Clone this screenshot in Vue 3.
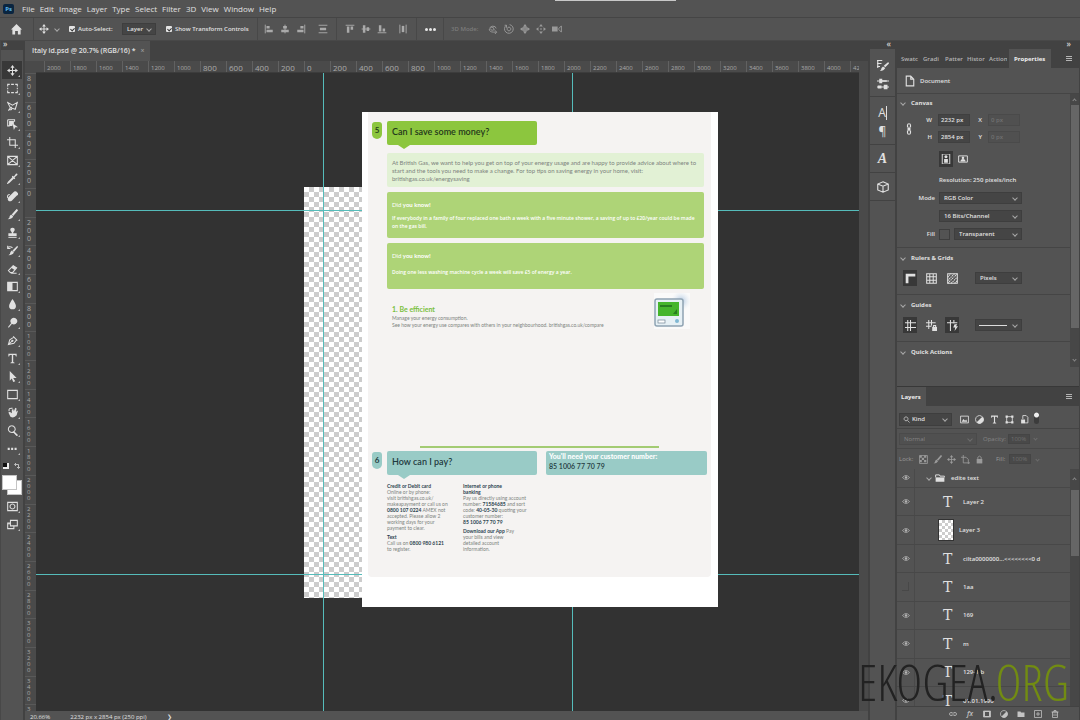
<template>
  <div class="app">
    <div class="window-handle"></div>

    <!-- menu bar -->
    <nav class="menubar">
      <span class="ps-logo">Ps</span>
      <button v-for="m in menus" :key="m" class="menu-item">{{ m }}</button>
    </nav>

    <!-- options bar -->
    <div class="options">
      <button class="home" aria-label="Home">
        <svg viewBox="0 0 12 12"><path class="f" d="M6 0 L12 6 H10.500 V11.500 H7.500 V7.500 H4.500 V11.500 H1.500 V6 H0 Z" /></svg>
      </button>
      <button class="current-tool" aria-label="Move tool">
        <svg viewBox="0 0 16 16"><path class="s" :d="icons.move.s" /><path class="f" :d="icons.move.f" /></svg>
        <i class="chev"></i>
      </button>
      <label class="check auto"><input v-model="autoSelect" type="checkbox" />Auto-Select:</label>
      <span class="select-box target">
        <select v-model="target" aria-label="Auto-select target"><option>Layer</option><option>Group</option></select>
      </span>
      <label class="check transform"><input v-model="showTransform" type="checkbox" />Show Transform Controls</label>
      <div v-for="(g, i) in alignGroups" :key="i" class="align-group" :class="'align-' + i">
        <button v-for="n in g" :key="n" :aria-label="n">
          <svg viewBox="0 0 16 16"><path class="s" :d="icons[n].s" /><path class="f" :d="icons[n].f" /></svg>
        </button>
      </div>
      <button class="more" aria-label="More options"><b></b><b></b><b></b></button>
      <div class="mode3d">
        <span>3D Mode:</span>
        <button v-for="n in modeIcons" :key="n" :aria-label="n">
          <svg viewBox="0 0 16 16"><path class="s" :d="icons[n].s" /><path class="f" :d="icons[n].f" /></svg>
        </button>
      </div>
    </div>

    <div class="workspace">
      <!-- tools -->
      <aside class="tools">
        <div class="dock-head">»</div>
        <button
          v-for="t in tools"
          :key="t"
          class="tool"
          :class="{ active: t === activeTool }"
          :aria-label="t"
          @click="activeTool = t"
        >
          <svg viewBox="0 0 16 16"><path class="s" :d="icons[t].s" /><path class="f" :d="icons[t].f" /></svg>
        </button>
        <div class="swatch-mini">
          <i class="mini-colors"></i>
          <svg viewBox="0 0 16 16"><path class="s" d="M4 5 H11 V12 M6 2 L3 5 L6 8 M8 10 L11 13 L14 10" /></svg>
        </div>
        <div class="swatches"><i class="bg"></i><i class="fg"></i></div>
        <button class="tool" aria-label="Quick mask">
          <svg viewBox="0 0 16 16"><path class="s" d="M1 2 H15 V14 H1 Z M8 4.500 A3.500 3.500 0 1 1 7.900 4.500" /></svg>
        </button>
        <button class="tool" aria-label="Screen mode">
          <svg viewBox="0 0 16 16"><path class="s" d="M5 2 H15 V10 H5 Z M5 6 H1 V14 H10 V10 M3 8 V5" /></svg>
        </button>
      </aside>

      <!-- document -->
      <main class="document">
        <div class="tabs"><div class="tab">Italy id.psd @ 20.7% (RGB/16) * <button aria-label="Close">×</button></div></div>
        <div class="doc-grid">
          <div class="corner"></div>
          <div class="ruler-x">
            <span v-for="n in rulerX" :key="n.id" :class="{ small: n.value > 999 }">{{ n.value }}</span>
          </div>
          <div class="ruler-y">
            <span v-for="n in rulerY" :key="n.id" :class="{ small: n.value > 999 }">
              <b v-for="(d, i) in String(n.value)" :key="i">{{ d }}</b>
            </span>
          </div>
          <div class="canvas">
            <div class="artboard"></div>
            <i class="guide v one"></i>
            <i class="guide v two"></i>
            <i class="guide h one"></i>
            <i class="guide h two"></i>

            <article class="bill">
              <div class="sheet">
                <section class="money">
                  <span class="badge">5</span>
                  <h2>Can I save some money?</h2>
                </section>
                <p class="box pale">
                  <span v-for="l in intro" :key="l">{{ l }}</span>
                </p>
                <p class="box green">
                  <span>Did <b>you know!</b></span>
                  <span class="fact">If everybody in a family of four replaced one bath a week with a five minute shower, a saving of up to £20/year could be made</span>
                  <span class="cont">on the gas bill.</span>
                </p>
                <p class="box green">
                  <span>Did <b>you know!</b></span>
                  <span class="fact single">Doing one less washing machine cycle a week will save £5 of energy a year.</span>
                </p>
                <div class="efficient">
                  <div>
                    <h3>1. Be efficient</h3>
                    <p>Manage your energy consumption.</p>
                    <p>See how your energy use compares with others in your neighbourhood. britishgas.co.uk/compare</p>
                  </div>
                  <svg class="meter" viewBox="0 0 36 36">
                    <defs>
                      <radialGradient id="glow"><stop offset="0" stop-color="#a9c3de" /><stop offset="1" stop-color="#e4ecf5" stop-opacity="0" /></radialGradient>
                    </defs>
                    <rect width="36" height="36" fill="#fafafa" />
                    <circle cx="27" cy="8" r="10" fill="url(#glow)" />
                    <rect x="1" y="6" width="28" height="27" rx="2" fill="#e6f0f5" stroke="#8fa3b3" stroke-width="1.500" />
                    <rect x="4" y="9" width="21" height="14" fill="#45b52c" />
                    <path d="M6 12 H18 V14 H6 Z M19 21 H23 V16 Z" fill="#287d20" />
                    <rect x="4" y="27" width="7" height="3" fill="#fff" stroke="#708594" stroke-width=".700" />
                    <circle cx="23" cy="28" r="2" fill="#80b7d3" />
                  </svg>
                </div>
                <hr />
                <section class="pay">
                  <span class="badge">6</span>
                  <h2>How can I pay?</h2>
                  <div class="customer"><b>You'll need your customer number:</b><span>85 1006 77 70 79</span></div>
                </section>
                <div class="columns">
                  <div>
                    <h4>Credit or Debit card</h4>
                    <p>Online or by phone:</p>
                    <p>visit britishgas.co.uk/</p>
                    <p>makeapayment or call us on</p>
                    <p><b>0800 107 0224</b> AMEX not</p>
                    <p>accepted. Please allow 2</p>
                    <p>working days for your</p>
                    <p>payment to clear.</p>
                    <h4 class="gap">Text</h4>
                    <p>Call us on <b>0800 980 6121</b></p>
                    <p>to register.</p>
                  </div>
                  <div>
                    <h4>Internet or phone</h4>
                    <h4>banking</h4>
                    <p>Pay us directly using account</p>
                    <p>number: <b>71584685</b> and sort</p>
                    <p>code: <b>40-05-30</b> quoting your</p>
                    <p>customer number:</p>
                    <p><b>85 1006 77 70 79</b></p>
                    <p class="gap"><b>Download our App</b> Pay</p>
                    <p>your bills and view</p>
                    <p>detailed account</p>
                    <p>information.</p>
                  </div>
                </div>
              </div>
            </article>
          </div>
        </div>
        <footer class="status"><span>20.66%</span><span>2232 px x 2854 px (250 ppi)</span><span>❯</span></footer>
      </main>

      <!-- collapsed panels -->
      <aside class="dock">
        <div class="dock-head">«</div>
        <div v-for="(g, i) in dockGroups" :key="i" class="dock-group">
          <button v-for="n in g" :key="n" :aria-label="n">
            <span v-if="icons[n].t" :class="n">{{ icons[n].t }}</span>
            <svg v-else viewBox="0 0 16 16"><path class="s" :d="icons[n].s" /><path class="f" :d="icons[n].f" /></svg>
          </button>
        </div>
      </aside>

      <!-- panels -->
      <aside class="panels">
        <div class="dock-head">»</div>
        <div class="panel-tabs">
          <button v-for="t in panelTabs" :key="t">{{ t }}</button>
          <button class="on">Properties</button>
          <i class="burger"></i>
        </div>
        <div class="props">
          <div class="doc-row">
            <svg viewBox="0 0 16 16"><path class="s" d="M3 1.500 H9 L13 5.500 V14.500 H3 Z M9 1.500 V5.500 H13" /></svg>
            Document
          </div>
          <div class="props-body">
            <div class="sections">
              <section class="sec canvas-sec">
                <h5><i class="chev"></i>Canvas</h5>
                <div class="dims">
                  <svg viewBox="0 0 8 16"><path class="s" d="M2 6 V3 Q2 1 4 1 T6 3 V6 M2 10 V13 Q2 15 4 15 T6 13 V10 M4 5 V11 M2 7.500 H6 M2 9 H6" /></svg>
                  <label for="w">W</label><input id="w" value="2232 px" />
                  <label for="x">X</label><input id="x" value="0 px" disabled />
                  <label for="h">H</label><input id="h" value="2854 px" />
                  <label for="y">Y</label><input id="y" value="0 px" disabled />
                </div>
                <div class="orient">
                  <button class="on" aria-label="Portrait"><svg viewBox="0 0 16 16"><path class="s" d="M2 0 H14 V16 H2 Z" /><path class="f" d="M8 2 A2.500 2.500 0 1 1 7.900 2 M5 8 H11 V14 H5 Z" /></svg></button>
                  <button aria-label="Landscape"><svg viewBox="0 0 16 16"><path class="s" d="M1 3 H15 V13 H1 Z" /><path class="f" d="M8 4 A2 2 0 1 1 7.900 4 M4 12 Q4 8 8 8 T12 12 Z" /></svg></button>
                </div>
                <p class="resolution">Resolution: 250 pixels/inch</p>
                <div class="field"><label for="mode">Mode</label><span class="select-box"><select id="mode"><option>RGB Color</option></select></span></div>
                <div class="field indent"><span class="select-box"><select aria-label="Depth"><option>16 Bits/Channel</option></select></span></div>
                <div class="field"><label for="fill">Fill</label><i class="fill-color"></i><span class="select-box"><select id="fill"><option>Transparent</option></select></span></div>
              </section>
              <section class="sec">
                <h5><i class="chev"></i>Rulers &amp; Grids</h5>
                <div class="icon-row">
                  <button class="on" aria-label="Rulers"><svg viewBox="0 0 16 16"><path class="f" d="M1 1 H15 V5 H5 V15 H1 Z" /></svg></button>
                  <button aria-label="Grid"><svg viewBox="0 0 16 16"><path class="s" d="M1 1 H15 V15 H1 Z M5.500 1 V15 M10.500 1 V15 M1 5.500 H15 M1 10.500 H15" /></svg></button>
                  <button aria-label="Pixel grid"><svg viewBox="0 0 16 16"><path class="s" d="M1 1 H15 V15 H1 Z" /><path class="s dotted" d="M1 6 L6 1 M1 11 L11 1 M1 15 L15 1 M6 15 L15 6 M11 15 L15 11" /></svg></button>
                  <span class="select-box"><select aria-label="Units"><option>Pixels</option></select></span>
                </div>
              </section>
              <section class="sec">
                <h5><i class="chev"></i>Guides</h5>
                <div class="icon-row">
                  <button class="on" aria-label="Show guides"><svg viewBox="0 0 16 16"><path class="s" d="M4 0 V16 M8 0 V16 M0 4 H16 M0 11 H16" /></svg></button>
                  <button aria-label="Lock guides"><svg viewBox="0 0 16 16"><path class="s" d="M4 0 V13 M8 0 V8 M0 4 H14 M0 9 H8 M11 10 V8 H14 V10" /><path class="f" d="M9 10 H16 V16 H9 Z" /></svg></button>
                  <button class="on" aria-label="Smart guides"><svg viewBox="0 0 16 16"><path class="s" d="M5 0 V16 M0 4 H15 M10 0 V5" /><path class="f" d="M11 6 H15 L13 9 H16 L11 16 L12 11 H9 Z" /></svg></button>
                  <span class="select-box line-style"><select aria-label="Guide style"><option></option></select></span>
                </div>
              </section>
              <section class="sec last"><h5><i class="chev"></i>Quick Actions</h5></section>
            </div>
            <div class="scroll"><i class="arrow up"></i><i class="thumb"></i><i class="arrow"></i></div>
          </div>
        </div>

        <div class="panel-tabs layers-tab"><button class="on">Layers</button><i class="burger"></i></div>
        <div class="filter">
          <span class="select-box kind">
            <svg viewBox="0 0 16 16"><path class="s" d="M7 2 A4.500 4.500 0 1 1 6.900 2 M10 10 L15 15" /></svg>
            <select aria-label="Filter kind"><option>Kind</option></select>
          </span>
          <button v-for="n in filterIcons" :key="n" :aria-label="n">
            <svg viewBox="0 0 16 16"><path class="s" :d="icons[n].s" /><path class="f" :d="icons[n].f" /></svg>
          </button>
          <i class="toggle"></i>
        </div>
        <div class="blend dim">
          <span class="select-box"><select aria-label="Blend mode" disabled><option>Normal</option></select></span>
          <label for="op">Opacity:</label><input id="op" value="100%" disabled /><i class="chev"></i>
        </div>
        <div class="locks dim">
          <span>Lock:</span>
          <svg v-for="n in lockIcons" :key="n" viewBox="0 0 16 16"><path class="s" :d="icons[n].s" /><path class="f" :d="icons[n].f" /></svg>
          <label for="fl">Fill:</label><input id="fl" value="100%" disabled /><i class="chev"></i>
        </div>
        <div class="layers">
          <ul>
            <li v-for="l in layers" :key="l.name" :class="l.kind">
              <span class="eye" :class="{ off: l.hidden }">
                <svg v-if="!l.hidden" viewBox="0 0 16 10"><path class="s" d="M1 5 Q8 -3 15 5 Q8 13 1 5 Z" /><circle class="f" cx="8" cy="5" r="2.500" /></svg>
              </span>
              <span v-if="l.kind === 'group'" class="folder">
                <i class="chev"></i>
                <svg viewBox="0 0 16 16"><path class="s" d="M1 7 V3 H7 L8 5 H15 V7" /><path class="f" d="M1 7 H15 V14 H1 Z" /></svg>
              </span>
              <i v-else-if="l.kind === 'pixel'" class="thumbnail"></i>
              <span v-else class="type">T</span>
              <span class="name">{{ l.name }}</span>
            </li>
          </ul>
          <div class="scroll"><i class="arrow up"></i><i class="thumb"></i></div>
        </div>
        <div class="layer-actions">
          <button v-for="n in layerActions" :key="n" :aria-label="n">
            <em v-if="n === 'fx'">fx</em>
            <svg v-else viewBox="0 0 16 16"><path class="s" :d="icons[n].s" /><path class="f" :d="icons[n].f" /></svg>
          </button>
        </div>
      </aside>
    </div>

    <div class="watermark">EKOGEA.<span>ORG</span></div>
  </div>
</template>

<script setup>
import { ref } from 'vue'

const autoSelect = ref(true)
const showTransform = ref(true)
const target = ref('Layer')
const activeTool = ref('move')

const menus = ['File', 'Edit', 'Image', 'Layer', 'Type', 'Select', 'Filter', '3D', 'View', 'Window', 'Help']
const panelTabs = ['Swatc', 'Gradi', 'Patter', 'Histor', 'Action']

const tools = [
  'move', 'marquee', 'lasso', 'objectSelect', 'crop', 'frame', 'eyedropper', 'heal', 'brush', 'stamp', 'history',
  'eraser', 'gradient', 'blur', 'dodge', 'pen', 'type', 'select', 'rectangle', 'hand', 'zoom', 'dots'
]
const alignGroups = [
  ['alignLeft', 'alignCenter', 'alignRight'],
  ['distribute'],
  ['alignTop', 'alignMiddle', 'alignBottom'],
  ['distributeX']
]
const modeIcons = ['orbit', 'roll', 'pan', 'slide', 'camera']
const dockGroups = [['brushes', 'brushSettings'], ['character', 'paragraph'], ['glyphs'], ['cube']]
const filterIcons = ['image', 'adjust', 'type', 'shape', 'smart']
const lockIcons = ['checker', 'brush', 'move', 'artboard', 'lock']
const layerActions = ['link', 'fx', 'mask', 'adjust', 'folder', 'plus', 'trash']

// s = stroked outline, f = filled shape, t = text glyph
const icons = {
  move: { s: 'M8 2 V14 M2 8 H14', f: 'M8 0 L11 4 H5 Z M8 16 L5 12 H11 Z M0 8 L4 5 V11 Z M16 8 L12 11 V5 Z' },
  marquee: { s: 'M1 5 V2 H4 M6 2 H10 M12 2 H15 V5 M15 7 V9 M15 11 V14 H12 M10 14 H6 M4 14 H1 V11 M1 9 V7' },
  lasso: { s: 'M2 14 L5 10 L1 2 L8 6 L15 2 L12 12 L6 10 M4 10 Q7 8 7 11 T3 12' },
  objectSelect: { s: 'M1 1 H11 V4 M1 1 V10 H4', f: 'M3 3 H10 V8 H8 V10 H3 Z M8 6 L16 12 H12 L10 16 Z' },
  crop: { s: 'M4 0 V12 H16 M0 4 H12 V16', f: '' },
  frame: { s: 'M1 2 H15 V14 H1 Z M1 2 L15 14 M15 2 L1 14' },
  eyedropper: { s: 'M9 6 L2 13 L1 15 L3 14 L10 7', f: 'M8 4 L10 5 L13 1 Q16 0 15 3 L11 6 L12 8 L11 9 L7 5 Z' },
  heal: { s: 'M4 5 Q0 5 1 10', f: 'M9 2 Q12 -1 15 2 T14 7 L7 14 Q4 16 2 14 T2 9 Z' },
  brush: { s: 'M15 1 L8 8', f: 'M14 0 L16 2 L9 10 L7 8 Z M6 8 L9 11 Q7 15 1 15 Q4 13 4 10 Z' },
  stamp: { s: 'M2 15 H14', f: 'M8 1 Q12 1 11 5 L9 8 V9 H14 V13 H2 V9 H7 V8 L5 5 Q4 1 8 1 Z' },
  history: { s: 'M1 4 Q4 1 8 4 M1 1 V5 H5', f: 'M15 1 L16 3 L10 10 L8 8 Z M7 8 L10 11 Q8 15 2 15 Q5 13 5 10 Z' },
  eraser: { s: 'M2 11 L9 4 L14 7 L8 14 H5 Z M6 15 H14', f: 'M6 7 L9 4 L14 7 L11 10 Z' },
  gradient: { s: 'M1 2 H15 V14 H1 Z', f: 'M1 2 H8 V14 H1 Z' },
  blur: { s: '', f: 'M8 0 Q13 7 13 10 A5 5 0 0 1 3 10 Q3 7 8 0 Z' },
  dodge: { s: 'M7 9 L2 15', f: 'M10 1 A5 5 0 1 1 9.900 1 Z' },
  pen: { s: 'M2 14 L4 7 L10 3 L14 7 L10 12 Z M2 14 L8 8 M9 2 L15 8', f: 'M8 7 A1.500 1.500 0 1 1 7.900 7' },
  type: { s: '', f: 'M2 1 H14 V5 H13 L12 3 H9 V13 L11 14 V15 H5 V14 L7 13 V3 H4 L3 5 H2 Z' },
  select: { s: '', f: 'M4 0 L14 10 H9 L12 15 L9 16 L7 11 L4 14 Z' },
  rectangle: { s: 'M1 2 H15 V14 H1 Z', f: '' },
  hand: { s: 'M3 6 Q2 1 8 2', f: 'M4 7 L7 9 V4 L9 3 L10 6 L12 1 L14 2 L13 7 L16 5 L14 12 Q10 17 5 14 L2 8 Z' },
  zoom: { s: 'M7 1 A5 5 0 1 1 6.900 1 M10 10 L15 15', f: 'M10 9 L16 15 L14 16 L9 11 Z' },
  dots: { s: '', f: 'M1 7 H4 V10 H1 Z M6 7 H9 V10 H6 Z M11 7 H14 V10 H11 Z' },
  alignLeft: { s: 'M2 1 V15', f: 'M4 3 H9 V7 H4 Z M4 9 H14 V13 H4 Z' },
  alignCenter: { s: 'M8 1 V15', f: 'M5 3 H11 V7 H5 Z M2 9 H14 V13 H2 Z' },
  alignRight: { s: 'M14 1 V15', f: 'M7 3 H12 V7 H7 Z M2 9 H12 V13 H2 Z' },
  distribute: { s: 'M1 2 H15 M1 14 H15', f: 'M3 6 H13 V10 H3 Z' },
  alignTop: { s: 'M1 2 H15', f: 'M3 4 H7 V14 H3 Z M9 4 H13 V9 H9 Z' },
  alignMiddle: { s: 'M1 8 H15', f: 'M3 2 H7 V14 H3 Z M9 5 H13 V11 H9 Z' },
  alignBottom: { s: 'M1 14 H15', f: 'M3 2 H7 V12 H3 Z M9 7 H13 V12 H9 Z' },
  distributeX: { s: 'M3 1 V15 M13 1 V15', f: 'M6 3 H10 V13 H6 Z' },
  orbit: { s: 'M13 7 A5 4 0 1 0 3 8 M2 8 Q2 13 9 13 H13 M5 5 Q9 4 10 9 Q7 11 4 9 M11 10 L14 13 L11 16', f: '' },
  roll: { s: 'M4 2 A7 7 0 1 0 9 1 M4 2 V6 M4 2 H1 M8 5 A3 3 0 1 1 7.900 5', f: '' },
  pan: { s: 'M8 3 V13 M3 8 H13 M5 5 H11 V11 H5 Z', f: 'M8 0 L11 4 H5 Z M8 16 L5 12 H11 Z M0 8 L4 5 V11 Z M16 8 L12 11 V5 Z' },
  slide: { s: 'M7 8 H9 M8 7 V9', f: 'M8 0 L11 4 H5 Z M8 16 L5 12 H11 Z M0 8 L4 5 V11 Z M16 8 L12 11 V5 Z' },
  camera: { s: 'M15 3 L11 7 V9 L15 13 Z', f: 'M0 4 H9 V12 H0 Z' },
  brushes: { s: 'M0 2 H7 M0 6 H6 M0 10 H4 M1 2 V12', f: 'M15 4 L16 6 L11 11 L9 9 Z M8 10 L11 12 Q9 16 4 16 Q6 14 6 12 Z' },
  brushSettings: { s: 'M0 4 H16 M0 12 H16', f: 'M3 1 H7 V7 H3 Z M7 3 H13 V5 H7 Z M9 9 H14 V15 H9 Z M1 10 H6 V14 H1 Z' },
  character: { t: 'A' },
  paragraph: { t: '¶' },
  glyphs: { t: 'A' },
  cube: { s: 'M8 1 L15 4 V12 L8 15 L1 12 V4 Z M1 4 L8 7 L15 4 M8 7 V15', f: '' },
  image: { s: 'M1 2 H15 V14 H1 Z', f: 'M3 12 L6 7 L9 10 L11 8 L13 12 Z' },
  adjust: { s: 'M8 1 A7 7 0 1 1 7.900 1 Z', f: 'M13 3 A7 7 0 0 1 3 13 Z' },
  shape: { s: 'M3 3 H13 V13 H3 Z', f: 'M1 1 H5 V5 H1 Z M11 1 H15 V5 H11 Z M1 11 H5 V15 H1 Z M11 11 H15 V15 H11 Z' },
  smart: { s: 'M5 7 V1 H11 L14 4 V14 H9', f: 'M2 8 H9 V15 H2 Z' },
  checker: { s: 'M1 1 H15 V15 H1 Z', f: 'M1 1 H5 V5 H1 Z M9 1 H13 V5 H9 Z M5 5 H9 V9 H5 Z M1 9 H5 V13 H1 Z M9 9 H13 V13 H9 Z' },
  artboard: { s: 'M4 0 V14 H16 M0 4 H9 L13 8 V16', f: '' },
  lock: { s: 'M5 7 V4 Q8 0 11 4 V7', f: 'M3 7 H13 V15 H3 Z' },
  link: { s: 'M7 5 H4 Q1 5 1 8 T4 11 H7 M9 5 H12 Q15 5 15 8 T12 11 H9 M5 8 H11', f: '' },
  mask: { s: 'M1 2 H15 V14 H1 Z', f: 'M1 2 H4 V14 H1 Z M12 2 H15 V14 H12 Z M1 2 H15 V4 H1 Z M1 12 H15 V14 H1 Z' },
  folder: { s: '', f: 'M1 3 H7 L8 5 H15 V14 H1 Z' },
  plus: { s: 'M1 1 H15 V15 H1 Z M8 4 V12 M4 8 H12', f: '' },
  trash: { s: 'M3 4 H13 V15 H3 Z M1 4 H15 M6 4 V1 H10 V4 M6 7 V12 M10 7 V12', f: '' }
}

// ruler labels, one for each 200 px of the document
const labels = (from, to) => {
  const list = []
  for (let n = from; n <= to; n += 200) list.push({ id: n, value: Math.abs(n) })
  return list
}
const rulerX = labels(-2000, 4200)
const rulerY = labels(-800, 3600)

const intro = [
  'At British Gas, we want to help you get on top of your energy usage and are happy to provide advice about where to',
  'start and the tools you need to make a change. For top tips on saving energy in your home, visit:',
  'britishgas.co.uk/energysaving'
]

const layers = [
  { name: 'edite text', kind: 'group' },
  { name: 'Layer 2', kind: 'text' },
  { name: 'Layer 3', kind: 'pixel' },
  { name: 'cilta0000000...<<<<<<<<0 d', kind: 'text' },
  { name: '1aa', kind: 'text', hidden: true },
  { name: '169', kind: 'text' },
  { name: 'm', kind: 'text' },
  { name: '129-1-b', kind: 'text' },
  { name: '01.01.1990', kind: 'text' }
]
</script>

<style>
body {
  background: #535353;
}
</style>

<style scoped>
* {
  box-sizing: border-box;
  margin: 0;
  padding: 0;
}
.app {
  position: relative;
  display: flex;
  flex-direction: column;
  height: 100vh;
  overflow: hidden;
  background: #535353;
  color: #e0e0e0;
  font: 600 6px/8px "Open Sans", "Noto Sans", sans-serif;
  white-space: nowrap;
}
button,
input,
select {
  border: 0;
  background: none;
  color: inherit;
  font: inherit;
  appearance: none;
  outline: none;
}
button {
  display: flex;
  align-items: center;
  justify-content: center;
}
svg {
  display: block;
  width: 10px;
  height: 10px;
  flex: none;
}
.s {
  fill: none;
  stroke: currentColor;
  stroke-width: 1.5;
}
.dotted {
  stroke-dasharray: 2 1;
}
.f {
  fill: currentColor;
}
.chev {
  flex: none;
  width: 4px;
  height: 4px;
  border: solid #a8a8a8;
  border-width: 0 1px 1px 0;
  transform: rotate(45deg);
}
.window-handle {
  position: absolute;
  top: 0;
  left: 555px;
  width: 121px;
  height: 1px;
  background: #c8c8c8;
}

/* menu */
.menubar {
  display: flex;
  align-items: center;
  height: 17px;
  padding-left: 3px;
  gap: 5px;
  font-size: 8px;
  font-weight: 400;
}
.ps-logo {
  width: 11px;
  height: 10px;
  margin-right: 3px;
  border-radius: 2px;
  background: #0a2540;
  color: #5cb8ee;
  font-size: 6px;
  line-height: 10px;
  font-weight: 700;
  text-align: center;
}

/* options */
.options {
  display: flex;
  align-items: center;
  height: 24px;
  flex: none;
  border-top: 1px solid #454545;
  border-bottom: 1px solid #484848;
}
.home {
  width: 34px;
  height: 22px;
  border-right: 1px solid #484848;
}
.home svg {
  width: 11px;
  height: 11px;
}
.current-tool {
  width: 33px;
  gap: 6px;
  margin-right: 2px;
  padding-right: 4px;
}
.check {
  display: flex;
  align-items: center;
  gap: 3px;
}
.check input {
  position: relative;
  width: 6px;
  height: 6px;
  border-radius: 1px;
  background: #e4e4e4;
}
.check input:checked::after {
  content: "";
  position: absolute;
  left: 2px;
  top: 1px;
  width: 2px;
  height: 3px;
  border: solid #333;
  border-width: 0 1px 1px 0;
  transform: rotate(45deg);
}
.auto {
  width: 53px;
}
.transform {
  width: 91px;
}
.select-box {
  position: relative;
  display: flex;
  align-items: center;
  height: 12px;
  background: #454545;
  border: 1px solid #3e3e3e;
}
.select-box::after {
  content: "";
  position: absolute;
  right: 4px;
  top: 3px;
  width: 3px;
  height: 3px;
  border: solid #a8a8a8;
  border-width: 0 1px 1px 0;
  transform: rotate(45deg);
}
.select-box select {
  width: 100%;
  height: 10px;
  padding: 0 4px;
  opacity: 1;
}
.target {
  width: 34px;
  margin-right: 10px;
}
.align-group {
  display: flex;
  height: 22px;
  gap: 6px;
  padding: 0 8px;
  color: #aaa;
}
.align-group button,
.mode3d button {
  width: 10px;
}
.align-0 {
  border-left: 1px solid #484848;
  padding-left: 6px;
}
.align-1 {
  padding-left: 4px;
  border-right: 1px solid #484848;
}
.align-3 {
  padding-left: 3px;
  border-right: 1px solid #484848;
}
.more {
  width: 27px;
  height: 22px;
  gap: 1px;
  border-right: 1px solid #484848;
}
.more b {
  width: 3px;
  height: 3px;
  border-radius: 2px;
  background: #e8e8e8;
}
.mode3d {
  display: flex;
  align-items: center;
  gap: 6px;
  padding-left: 7px;
  color: #9a9a9a;
}
.mode3d span {
  width: 31px;
  color: #7c7c7c;
}

.workspace {
  flex: 1;
  min-height: 0;
  display: flex;
}
.dock-head {
  height: 9px;
  flex: none;
  background: #424242;
  color: #d0d0d0;
  font-size: 8px;
  line-height: 6px;
}

/* tools */
.tools {
  width: 25px;
  flex: none;
  display: flex;
  flex-direction: column;
  align-items: center;
  border-left: 1px solid #484848;
  border-right: 2px solid #424242;
}
.tools .dock-head {
  width: 100%;
  padding-left: 2px;
  margin-bottom: 11px;
}
.tool {
  position: relative;
  width: 20px;
  height: 18px;
  flex: none;
}
.tool svg {
  width: 11px;
  height: 11px;
}
.tool::after {
  content: "";
  position: absolute;
  right: 2px;
  bottom: 2px;
  border: 1px solid transparent;
  border-right-color: #b8b8b8;
  border-bottom-color: #b8b8b8;
}
.tool.active {
  background: #383838;
}
.swatch-mini {
  display: flex;
  align-items: center;
  gap: 4px;
  height: 18px;
}
.swatch-mini svg {
  width: 8px;
  height: 8px;
}
.mini-colors {
  width: 6px;
  height: 6px;
  background: #111;
  border: solid #eee;
  border-width: 0 2px 2px 0;
}
.swatches {
  display: grid;
  grid-template: repeat(4, 5px) / repeat(4, 5px);
  margin-bottom: 2px;
}
.swatches i {
  background: #fff;
  border: 1px solid #c4c4c4;
}
.bg {
  grid-area: 2 / 2 / 5 / 5;
}
.fg {
  grid-area: 1 / 1 / 4 / 4;
}

/* document */
.document {
  flex: 1;
  min-width: 0;
  display: flex;
  flex-direction: column;
  border-right: 2px solid #424242;
}
.tabs {
  height: 20px;
  flex: none;
  background: #424242;
}
.tab {
  display: flex;
  align-items: center;
  width: 125px;
  height: 20px;
  padding-left: 7px;
  background: #535353;
  font-size: 7px;
  font-weight: 600;
}
.tab button {
  margin-left: 5px;
  color: #999;
}
.doc-grid {
  flex: 1;
  min-height: 0;
  display: grid;
  grid-template: 12px minmax(0, 1fr) / 11px minmax(0, 1fr);
  padding-right: 9px;
  background: #4a4a4a;
}
.ruler-x,
.ruler-y {
  display: flex;
  overflow: hidden;
  background: #4a4a4a;
  color: #aaa;
  font-size: 8px;
  font-weight: 400;
}
.ruler-x {
  padding-left: 8px;
  border-bottom: 1px solid #3c3c3c;
}
.ruler-x span {
  width: 26px;
  flex: none;
  padding: 3px 0 0 2px;
  border-left: 1px solid #616161;
}
.ruler-x .small {
  font-size: 6px;
}
.ruler-y {
  flex-direction: column;
}
.ruler-y span {
  height: 4.5%;
  flex: none;
  display: flex;
  flex-direction: column;
  padding: 1px 0 0 2px;
  border-top: 1px solid #595959;
}
.ruler-y b {
  font-weight: 400;
  font-size: 7px;
  line-height: 8px;
}
.ruler-y .small b {
  font-size: 6px;
  line-height: 6px;
}
.canvas {
  position: relative;
  overflow: hidden;
  background: #323232;
}
.artboard {
  position: absolute;
  left: 268px;
  top: 114px;
  width: 289px;
  height: 411px;
  background: conic-gradient(#ccc 25%, #fff 0 50%, #ccc 0 75%, #fff 0) 0 0 / 10px 10px;
}
.guide {
  position: absolute;
  background: #55bcba;
}
.guide.v {
  top: 0;
  bottom: 0;
  width: 1px;
}
.guide.h {
  left: 0;
  right: 0;
  height: 1px;
}
.v.one {
  left: 287px;
}
.v.two {
  left: 536px;
}
.h.one {
  top: 137px;
}
.h.two {
  top: 501px;
}
.status {
  display: flex;
  height: 9px;
  flex: none;
  gap: 20px;
  padding-left: 5px;
  font-weight: 400;
  line-height: 12px;
}

/* bill */
.bill {
  position: absolute;
  left: 326px;
  top: 39px;
  width: 356px;
  height: 495px;
  padding: 0 7px 0 6px;
  background: #fff;
  color: #7d837e;
  font: 400 6px/8px Lato, sans-serif;
}
.sheet {
  height: 465px;
  padding: 9px 7px 0 19px;
  border-radius: 0 0 4px 4px;
  background: #f5f3f2;
}
.money,
.pay {
  display: flex;
  gap: 5px;
  margin-left: -15px;
}
.badge {
  width: 10px;
  height: 17px;
  margin-top: 1px;
  border-radius: 3px 3px 5px 5px;
  background: #8cc63e;
  color: #26401a;
  font-size: 8px;
  line-height: 17px;
  font-weight: 700;
  text-align: center;
}
h2 {
  position: relative;
  width: 150px;
  height: 24px;
  padding-left: 5px;
  border-radius: 2px;
  background: #8cc63e;
  color: #23371c;
  font-size: 9px;
  line-height: 22px;
  font-weight: 600;
}
h2::after {
  content: "";
  position: absolute;
  left: 11px;
  top: 24px;
  border: solid transparent;
  border-width: 4px 6px 0;
  border-top-color: #8cc63e;
}
.box {
  display: flex;
  flex-direction: column;
  padding: 0 5px;
  border-radius: 2px;
}
.pale {
  height: 34px;
  margin-top: 8px;
  padding-top: 6px;
  background: #e2f1d5;
}
.green {
  height: 46px;
  margin-top: 5px;
  padding-top: 9px;
  background: #aed477;
  color: #fff;
}
.fact,
.cont {
  font: 600 5px/8px "Open Sans", sans-serif;
}
.fact {
  margin-top: 5px;
}
.single {
  margin-top: 8px;
}
.gap {
  margin-top: 3px;
}
.efficient {
  display: flex;
  justify-content: space-between;
  height: 41px;
  padding: 4px 14px 0 5px;
  line-height: 7px;
}
.efficient > div {
  padding-top: 11px;
}
h3 {
  color: #79bf3d;
  font-size: 7px;
  line-height: 11px;
}
.efficient p {
  font-size: 5px;
}
.meter {
  width: 36px;
  height: 36px;
}
hr {
  width: 239px;
  margin: 116px 0 0 33px;
  border: 0;
  border-top: 2px solid #a3cb73;
}
.pay {
  margin-top: 3px;
  margin-right: -3px;
}
.pay .badge,
.pay h2 {
  background: #99cbc6;
  color: #1f3a40;
}
.pay h2::after {
  border-top-color: #99cbc6;
}
.customer {
  flex: 1;
  display: flex;
  flex-direction: column;
  height: 24px;
  margin-left: 4px;
  padding: 0 3px;
  border-radius: 2px;
  background: #99cbc6;
  color: #1f3a40;
  font-size: 7px;
  line-height: 10px;
  font-weight: 600;
}
.customer b {
  color: #fff;
}
.columns {
  display: grid;
  grid-template-columns: 76px 76px;
  padding-top: 8px;
  font-size: 5px;
  line-height: 6px;
}
.columns b,
h4 {
  color: #2c4350;
  font-weight: 700;
}
h4 {
  font-size: 5px;
}

/* dock */
.dock {
  width: 25px;
  flex: none;
}
.dock .dock-head {
  height: 8px;
  padding: 0 4px;
  text-align: right;
}
.dock-group {
  display: flex;
  flex-direction: column;
  justify-content: center;
  align-items: center;
  height: 28px;
  border-bottom: 1px solid #424242;
}
.dock-group:nth-child(2),
.dock-group:nth-child(3) {
  height: 48px;
  padding-top: 3px;
}
.dock-group button {
  width: 24px;
  height: 19px;
}
.dock-group svg {
  width: 12px;
  height: 12px;
}
.dock-group span {
  font-size: 12px;
  line-height: 14px;
  font-weight: 400;
}
.dock-group .character {
  border-right: 1px solid;
}
.dock-group .glyphs {
  font: italic 700 14px/14px "Liberation Serif", serif;
}

/* panels */
.panels {
  width: 185px;
  flex: none;
  display: flex;
  flex-direction: column;
  border: solid #424242;
  border-width: 0 1px 0 2px;
}
.panels > .dock-head {
  height: 8px;
  padding-right: 8px;
  text-align: right;
}
.panel-tabs {
  display: flex;
  align-items: center;
  height: 19px;
  flex: none;
  padding-right: 7px;
  background: #424242;
  color: #b5b5b5;
}
.panel-tabs button {
  width: 22px;
  height: 19px;
  padding-left: 4px;
  overflow: hidden;
  justify-content: flex-start;
}
.panel-tabs .on {
  width: 42px;
  margin-left: 2px;
  padding-left: 5px;
  background: #535353;
  color: #f0f0f0;
  font-weight: 700;
}
.burger {
  width: 6px;
  height: 5px;
  margin-left: auto;
  border: solid #b5b5b5;
  border-width: 1px 0;
  background: linear-gradient(#424242 1px, #b5b5b5 1px 2px, #424242 2px);
}
.props {
  height: 318px;
  flex: none;
}
.doc-row {
  display: flex;
  align-items: center;
  gap: 4px;
  height: 26px;
  padding-left: 7px;
  border-bottom: 1px solid #454545;
}
.doc-row svg {
  width: 12px;
  height: 12px;
}
.props-body {
  display: flex;
}
.sections {
  flex: 1;
}
.sec {
  height: 47px;
  padding-top: 6px;
  border-bottom: 1px solid #454545;
}
.canvas-sec {
  height: 154px;
  padding-top: 5px;
}
.last {
  border: 0;
}
h5 {
  display: flex;
  align-items: center;
  gap: 6px;
  padding-left: 4px;
  font-size: 6px;
  line-height: 8px;
  font-weight: 700;
}
.dims {
  display: grid;
  grid-template-columns: 10px 18px 32px 14px 32px;
  column-gap: 2px;
  row-gap: 5px;
  align-items: center;
  padding: 7px 0 0 9px;
}
.dims svg {
  grid-row: 1 / 3;
  width: 6px;
  height: 12px;
}
.dims label {
  padding-right: 4px;
  text-align: right;
}
input:not([type]) {
  width: 100%;
  height: 12px;
  padding-left: 2px;
  background: #454545;
  border: 1px solid #404040;
}
input:disabled {
  background: #505050;
  border-color: #4a4a4a;
  color: #707070;
}
.orient {
  display: flex;
  gap: 3px;
  padding: 8px 0 0 42px;
}
.orient button {
  width: 14px;
  height: 16px;
}
.on {
  background: #383838;
}
.resolution {
  padding: 9px 0 5px 42px;
}
.field {
  display: flex;
  align-items: center;
  gap: 4px;
  height: 18px;
}
.field label {
  width: 38px;
  text-align: right;
}
.indent {
  padding-left: 42px;
}
.field .select-box {
  width: 83px;
}
.fill-color {
  width: 11px;
  height: 11px;
  border: 1px solid #3e3e3e;
}
.field .fill-color + .select-box {
  width: 68px;
}
.icon-row {
  display: flex;
  align-items: center;
  gap: 7px;
  padding: 8px 0 0 6px;
}
.icon-row button {
  width: 14px;
  height: 16px;
}
.icon-row svg {
  width: 11px;
  height: 11px;
}
.icon-row .select-box {
  width: 47px;
  margin-left: 9px;
}
.line-style::before {
  content: "";
  position: absolute;
  left: 3px;
  width: 28px;
  height: 1px;
  background: #ddd;
}
.scroll {
  width: 9px;
  height: 273px;
  display: flex;
  flex-direction: column;
  align-items: center;
  background: #474747;
}
.thumb {
  width: 8px;
  height: 223px;
  background: #666;
}
.arrow {
  width: 3px;
  height: 3px;
  margin: auto 0 6px;
  border: solid #888;
  border-width: 0 1px 1px 0;
  transform: rotate(45deg);
}
.arrow.up {
  margin: 5px 0 3px;
  transform: rotate(225deg);
}

/* layers */
.layers-tab {
  height: 20px;
  border-top: 1px solid #383838;
}
.layers-tab .on {
  width: 29px;
  margin: 0;
  padding-left: 4px;
}
.filter {
  display: flex;
  align-items: center;
  gap: 4px;
  height: 23px;
  flex: none;
  padding: 4px 0 0 2px;
  border-bottom: 1px solid #454545;
}
.kind {
  width: 53px;
  height: 13px;
  margin-right: 3px;
  padding-left: 3px;
}
.kind svg {
  width: 7px;
  height: 7px;
}
.kind select {
  padding-left: 2px;
}
.filter button {
  width: 11px;
}
.filter button svg {
  width: 9px;
  height: 9px;
}
.toggle {
  width: 5px;
  height: 12px;
  margin-bottom: 2px;
  border-radius: 3px;
  background: radial-gradient(circle at 50% 3px, #eee 2px, #3c3c3c 3px);
}
.dim {
  display: flex;
  align-items: center;
  flex: none;
  color: #858585;
  font-weight: 400;
}
.dim input:not([type]) {
  width: 22px;
  height: 10px;
  margin-right: 4px;
  background: #494949;
  border-color: #454545;
}
.dim .chev {
  width: 3px;
  height: 3px;
  border-color: #6d6d6d;
}
.blend {
  height: 20px;
  border-bottom: 1px solid #484848;
}
.blend .select-box {
  width: 78px;
  margin: 0 6px 0 2px;
  background: #505050;
  border-color: #4a4a4a;
}
.blend .select-box::after {
  border-color: #6d6d6d;
}
.blend label {
  width: 25px;
}
.locks {
  height: 20px;
  gap: 5px;
  padding-left: 2px;
  color: #9a9a9a;
}
.locks svg {
  width: 9px;
  height: 9px;
}
.locks span {
  width: 15px;
}
.locks label {
  width: 13px;
  margin-left: 7px;
}
.locks input:not([type]) {
  margin: 0 0 0 -5px;
}
.layers {
  flex: 1;
  min-height: 0;
  display: flex;
  overflow: hidden;
}
.layers ul {
  flex: 1;
  list-style: none;
}
.layers li {
  display: flex;
  align-items: center;
  height: 12%;
  border-bottom: 1px solid #484848;
}
.layers li.group {
  height: 8%;
}
.eye {
  display: flex;
  align-items: center;
  justify-content: center;
  width: 18px;
  height: 100%;
  border-right: 1px solid #4a4a4a;
  color: #b5b5b5;
}
.eye svg {
  width: 8px;
  height: 5px;
}
.off::after {
  content: "";
  width: 6px;
  height: 8px;
  border: solid #484848;
  border-width: 0 1px 1px 0;
}
.folder {
  display: flex;
  align-items: center;
  gap: 4px;
  width: 36px;
  padding-left: 12px;
}
.type {
  width: 48px;
  padding-left: 28px;
  font: 400 14px/16px "DejaVu Serif", serif;
}
.thumbnail {
  width: 16px;
  height: 22px;
  margin: 0 5px 0 23px;
  border: 1px solid #333;
  background: conic-gradient(#ccc 25%, #fff 0 50%, #ccc 0 75%, #fff 0) 0 0 / 6px 6px;
}
.layers .scroll {
  height: auto;
}
.layers .up {
  margin: 9px 0;
}
.layers .thumb {
  height: 66px;
}
.layer-actions {
  display: flex;
  align-items: center;
  gap: 7px;
  height: 14px;
  flex: none;
  padding-left: 51px;
  border-top: 1px solid #424242;
  color: #c4c4c4;
}
.layer-actions button {
  width: 10px;
}
.layer-actions em {
  font-size: 7px;
}
.layer-actions svg {
  width: 8px;
  height: 8px;
}

.watermark {
  position: absolute;
  right: 11px;
  bottom: 14px;
  color: #222;
  font: 300 50px/48px "Open Sans Condensed Light", "Open Sans Condensed", "Liberation Sans Narrow", sans-serif;
  pointer-events: none;
}
.watermark span {
  color: #728c12;
}
</style>
